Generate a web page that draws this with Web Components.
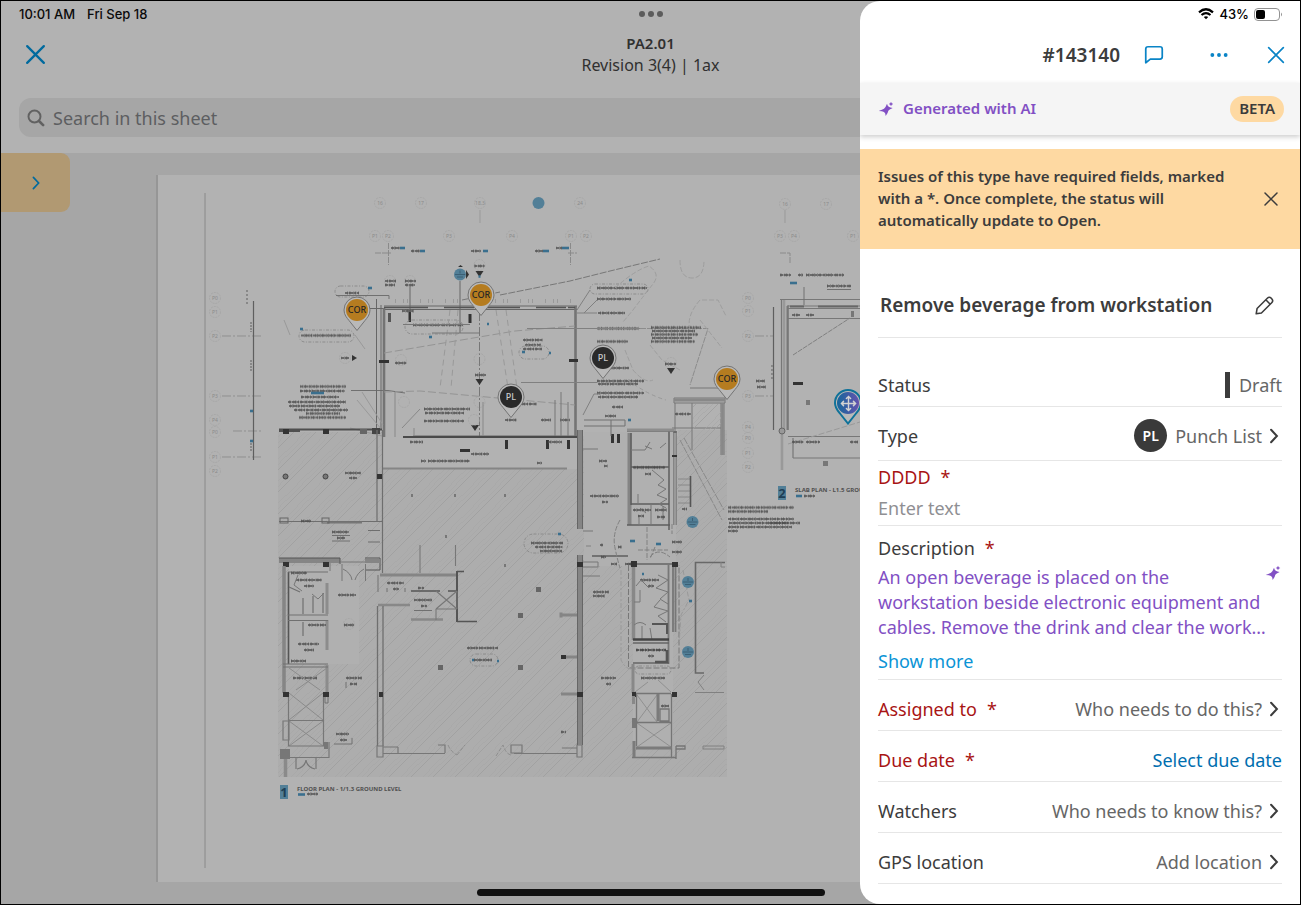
<!DOCTYPE html>
<html lang="en">
<head>
<meta charset="utf-8">
<title>PA2.01 – Issue #143140</title>
<meta name="viewport" content="width=device-width, initial-scale=1">
<style>
  *, *::before, *::after { box-sizing: border-box; }
  body { margin: 0; background: #000; font-family: "Noto Sans", "Open Sans", sans-serif; color: #3c3c3c; }
</style>
</head>
<body>
<tablet-app></tablet-app>

<script>
const RESET = `<style>
  *, *::before, *::after { box-sizing: border-box; }
  button { font: inherit; color: inherit; background: none; border: 0; padding: 0; margin: 0; cursor: pointer; }
  svg { display: block; flex: none; }
</style>`;

class BaseElement extends HTMLElement {
  constructor() {
    super();
    this.attachShadow({ mode: "open" }).innerHTML = RESET + this.render();
  }
  render() { return ""; }
}

/* Icons */
const ICONS = {
  close: '<path d="M4 4 20 20M20 4 4 20"/>',
  chevron: '<path d="M8.500 4.500 15.500 12 8.500 19.500"/>',
  search: '<circle cx="10" cy="10" r="8"/><path d="M16 16 21.500 21.500" stroke-width="3.500"/>',
  comment: '<path d="M3 19.500V5.500Q3 3 5.500 3H18.500Q21 3 21 5.500V14Q21 16.500 18.500 16.500H8L3 20.500Z" stroke-linejoin="round"/>',
  more: '<g fill="currentColor" stroke="none"><circle cx="4" cy="12" r="2.300"/><circle cx="12" cy="12" r="2.300"/><circle cx="20" cy="12" r="2.300"/></g>',
  pencil: '<path d="M2.500 21.500 3.500 15.500 15.500 3.500Q17.500 1.500 20 4 22.500 6.500 20.500 8.500L8.500 20.500ZM13.500 5.500 18.500 10.500" stroke-linejoin="round"/>',
  sparkle: '<g fill="currentColor" stroke="none"><path d="M13.500 4Q14.500 9.500 22 10.500 16.500 13 15.500 14.500 15 18 11.500 22.500 11.500 18 9 16.500 6.500 15 1 15 6.500 13 9 11.500 12 8.500 13.500 4Z"/><path d="M19.500 1 20.600 3.400 23 4.500 20.600 5.600 19.500 8 18.400 5.600 16 4.500 18.400 3.400Z"/></g>',
  move: '<path d="M12 2V22M2 12H22M9 5 12 2 15 5M9 19 12 22 15 19M5 9 2 12 5 15M19 9 22 12 19 15"/>'
};
customElements.define("ui-icon", class extends HTMLElement {
  connectedCallback() {
    if (this.shadowRoot) return;
    const size = this.getAttribute("size") || 24;
    const stroke = this.getAttribute("stroke") || 2;
    this.attachShadow({ mode: "open" }).innerHTML = `
      <style>:host { display: inline-flex; flex: none; } svg { display: block; }</style>
      <svg width="${size}" height="${size}" viewBox="0 0 24 24" fill="none" stroke="currentColor"
        stroke-width="${stroke}" stroke-linecap="round" aria-hidden="true">${ICONS[this.getAttribute("name")]}</svg>`;
  }
});

/* Issue pins placed on the sheet */
customElements.define("map-pin", class extends BaseElement {
  render() {
    return `<style>
      :host { position: absolute; width: 28px; height: 36px; font-size: 9px; font-weight: 500; line-height: 12px; color: #ccc;
        --dot: #2a2a2a; --shell: #b9b9b9; --edge: #747474; --edge-width: 1; }
      :host([kind="cor"]) { --dot: #b57c20; color: #252525; }
      :host([kind="move"]) { --dot: linear-gradient(90deg, #16679b, #6552ae); --edge: #0f7299; --edge-width: 2; color: #d2d2d2; }
      svg { position: absolute; inset: 0; }
      .shell { fill: var(--shell); stroke: var(--edge); stroke-width: var(--edge-width); }
      .dot { position: relative; width: 22px; height: 22px; margin: 3px; border-radius: 50%; background: var(--dot);
        display: flex; align-items: center; justify-content: center; }
    </style>
    <svg width="28" height="36" viewBox="0 0 28 36"><path class="shell" d="M14 1A13 13 0 0 0 1 14C1 19 4 22 6 24.500L14 34.500 22 24.500C24 22 27 19 27 14A13 13 0 0 0 14 1Z"/></svg>
    <div class="dot"><slot></slot></div>`;
  }
});

/* The drawing on the sheet */
const line = (d, w = 1, c = "#707070", extra = "") => `<path d="${d}" stroke="${c}" stroke-width="${w}" fill="none" ${extra}/>`;
const note = (x, y, w, c = "#4c4c4c") =>
  line(`M${x} ${y}h${w}`, 2, c, 'stroke-dasharray="3 .6 5 .5 2 .7 4 .5" opacity=".7"') +
  line(`M${x} ${y}h${w}`, 3.4, c, `stroke-dasharray="1 2 .8 1.500 1.200 3 .7 1" stroke-dashoffset="${(x + y) % 7}" opacity=".5"`);
const notes = (x, w, ys) => ys.map((y, i) => note(x + (i % 2), y, w - (i * 7) % 11)).join("");
const bubble = (x, y, t = "") => `<circle cx="${x}" cy="${y}" r="5.500" fill="none" stroke="#a2a2a2" stroke-width=".7" stroke-dasharray="2 1"/>` +
  (t ? `<text x="${x}" y="${y + 2}" font-size="5" fill="#8a8a8a" text-anchor="middle">${t}</text>` : "");
const blue = (x, y, w) => line(`M${x} ${y}h${w}`, 2.6, "#3a6f8e");
const spot = (x, y) => `<circle cx="${x}" cy="${y}" r="6" fill="#527f97"/>`;
const mark = (x, y) => spot(x, y) + line(`M${x - 5} ${y}H${x + 5}M${x - 3} ${y + 2.5}H${x + 3}M${x} ${y - 4}V${y - 1}`, 1, "#3c6075");
const block = (x, y, w, h, c = "#333") => `<rect x="${x}" y="${y}" width="${w}" height="${h}" fill="${c}"/>`;
const cloud = (x, y, w, h) => `<rect x="${x}" y="${y}" width="${w}" height="${h}" rx="${h / 2}" fill="none" stroke="#8c8c8c" stroke-width="1" stroke-dasharray="3 1.500 1 1.500"/>`;
const tri = (x, y) => `<path d="M${x - 4} ${y - 3}h8l-4 6z" fill="#333"/>`;

const DRAWING = [
  line("M205 193V868", 1.6, "#999"),
  /* floor hatch and unhatched rooms */
  '<path d="M278 432H383V469H582V436H678V430H727V777H278Z" fill="#adadad"/>',
  '<path d="M278 432H383V469H582V436H678V430H727V777H278Z" fill="url(#hatch)"/>',
  block(289, 566, 70, 98, "#b0b0b0"), block(584, 432, 92, 134, "#b0b0b0"), block(633, 566, 40, 182, "#b0b0b0"),
  /* column bubbles */
  bubble(380, 203, "16"), bubble(421, 203, "17"), bubble(480, 203, "18.3"), bubble(580, 203, "24"), bubble(785, 204, "16"), bubble(826, 204, "17"),
  spot(538.5, 203), line("M480 210V223M785 210V223", 1, "#999"),
  [375, 388, 449, 512, 571, 586, 780, 794, 853].map((x, i) => bubble(x, 236, "P" + (i % 4 + 1))).join(""),
  [298, 312, 336, 396, 420, 432, 457, 471].map((y, i) => bubble(215, y, "P" + (i % 5))).join(""),
  [298, 311, 336, 396, 427, 438, 453, 467].map((y, i) => bubble(748, y, "P" + (i % 5))).join(""),
  /* dimension strings */
  note(391, 248, 9), blue(400, 248, 5), note(411, 251, 9), blue(420, 251, 5), note(471, 251, 10), blue(483, 251, 5),
  note(535, 251, 8), blue(543, 251, 6), note(556, 248, 6), blue(562, 248, 7),
  line("M375 253H391M388.500 243V265M570.500 243V265M568 253H577M780 253H790V263", 1, "#8a8a8a", 'stroke-dasharray="6 1"'),
  line("M222 336H262M222 396H262M233 431H262M222 457H262M755 336H773M755 396H773", 1, "#8f8f8f", 'stroke-dasharray="9 2 2 2"'),
  line("M253.500 301V460M773.500 307V430", 1.200, "#5f5f5f"), line("M251 322V332M251 360V372M251 440V452", 2, "#888", 'stroke-dasharray="2 1"'), blue(250, 411, 3), blue(250, 441, 3),
  line("M247 290V304M772 365V380", 2, "#888", 'stroke-dasharray="2 2"'),
  /* markers above the hall */
  mark(460, 274.5), '<path d="M466 270l3 4.500-3 4.500zM458 267l5 0-2.500-2z" fill="#333"/>', tri(479.5, 274), note(474, 266, 11), bubble(479.5, 265), bubble(390, 281), bubble(410, 281), note(385, 281, 11), note(385, 285, 10), note(405, 281, 11), note(405, 285, 10),
  line("M460 281V333M410 286V322", 1, "#666"), block(408.500, 312, 2.500, 10), block(468.500, 314, 3, 9), block(388, 313, 3, 9, "#555"),
  line("M479.500 282V436", 1, "#777", 'stroke-dasharray="9 2 2 2"'), blue(478.500, 276.500, 2),
  cloud(335, 286, 34, 11), line("M336 295.500H389V299", 1), note(345, 293, 14), cloud(299, 330, 55, 12), note(301, 335.500, 50), cloud(405, 320, 58, 14), note(413, 325, 50),
  bubble(345, 358), note(341, 358, 8), '<path d="M352 355l5 3-5 3z" fill="#333"/>', blue(368, 288, 4), blue(300, 329, 3), blue(429, 337, 3), blue(487, 324, 2),
  note(300, 386.5, 46), notes(300, 45, [391, 397]), notes(288, 58, [402, 406]), note(294, 410, 54), note(306, 413.5, 34), note(299, 417.500, 47), blue(311, 393, 13), line("M351 390.500H388L405 393", 1),
  line("M284 320l6 15M355 335l10 14", 1, "#999"),
  /* main hall */
  line("M370 308.500H384M384 306H577M384 309.500H577M376.500 299V430M381 305V430M413 436H582", 1, "#666"),
  line("M384 308V437M575.500 306V437", 2.6, "#747474"), line("M395 301H574", 4, "#999", 'stroke-dasharray="1 7 1 3 1 12"'), line("M403 437H580", 2.2, "#4a4a4a"), line("M383 468.500H567", 2.2, "#858585"),
  line("M384 307.500H575", 1.6, "#555", 'stroke-dasharray="44 16 30 2"'),
  block(379, 360, 10, 3), block(569, 359, 9, 3), block(505, 440, 3, 9), block(546, 440, 3, 9), block(567, 440, 3, 9), block(611, 434, 3, 9), block(617, 434, 3, 9), block(460, 449, 10, 3),
  line("M384 353L515 331 575 326M384 392 420 391 575 405", 1, "#949494", 'stroke-dasharray="8 3"'),
  line("M450 310L440 388M458 310 451 388M496 310 508 388M506 310 517 388", 1, "#999", 'stroke-dasharray="6 4"'),
  line("M500 295L570 281 610 271 660 259M462 300 500 292", 1, "#777", 'stroke-dasharray="7 1.500"'),
  line("M432 333l48 0M403 324.500H470", 1, "#777"), note(402, 311, 12), note(523, 340, 20), note(525, 345, 16), note(523, 349, 19), cloud(519, 346, 30, 13), blue(522, 352, 3), blue(549, 353, 2),
  bubble(401, 360), note(395, 363, 12), bubble(479.5, 359), note(475, 375, 11), tri(479.500, 382), tri(475, 428), bubble(474, 420), bubble(404, 402), bubble(479.500, 402),
  notes(424, 46, [409, 413]), note(424, 421, 40), line("M402 428L420 409M483 402V436M414 428V436M395 392V437", 1, "#888"), note(517, 404, 20), note(505, 420, 12), note(541, 420, 10), note(560, 420, 10),
  line("M555 400V436M561 392V436M568 402V436", 1, "#777"), note(421, 461, 5), note(428, 461, 42), note(471, 454, 18), note(537, 463, 5),
  line("M350 428L382 436M357 400 382 430M362 392 383 425", 1, "#999"), note(410, 442, 13), note(548, 442, 14),
  /* notes right of the hall */
  notes(597, 50, [288]), notes(597, 34, [299, 313]), note(597, 328.5, 42), note(597, 341.5, 31), note(597, 368, 32), notes(597, 47, [381, 384]), notes(597, 47, [393, 397]),
  line("M577 313H597M527 328.500H640M521 382.500H597M584 313L597 300M577 310 590 290M583 415 594 394H600", 1, "#808080"), line("M640 328.500H708L690 385", 1, "#8c8c8c", 'stroke-dasharray="6 1"'), notes(651, 50, [327.5, 331, 334.5, 338, 341.5]), blue(629, 280, 3), cloud(590, 284, 58, 10),
  line("M615 288q20-18 34-22q12 8 4 18t-20 26l-10 12M690 330q-4-14 10-30h18l8 16M625 350l8 20q12 14 20 10M700 320l22 28M680 260q0 18 12 18t12-18M650 345l12 15 18 10", 1, "#9e9e9e", 'stroke-dasharray="5 2"'),
  bubble(671, 363), tri(671, 371), note(665, 364, 11), note(612, 407, 11), note(605, 416, 11), blue(628, 420, 3), line("M584 420H625V426H584M611 420V436", 1, "#707070"),
  line("M628 380q20 15 38 20", 1, "#999", 'stroke-dasharray="4 3"'),
  line("M674 398H725V403H674ZM675 403V445M692 403V450M721 403V455M724 403V455M672 428H721M690 388H720", 1, "#777"), line("M674 400H725", 3, "#888"), line("M722.500 403V455", 2.5, "#888"), note(675, 414, 16), block(693, 404, 28, 26, "url(#hatch)"),
  line("M680 440L722 520M684 438 724 510", 1, "#8a8a8a", 'stroke-dasharray="7 1"'),
  /* west rooms */
  line("M279 429.500H382M279 431H300", 2.2, "#4f4f4f"), block(283, 429, 6, 5), block(323, 429, 6, 5), block(360, 429, 7, 5, "#666"), block(372, 428, 8, 6, "#444"),
  line("M377 430V521M382.500 430V573M279 521.500H382M380 530.500H368M380 542H368", 1.2, "#6e6e6e"), line("M327 522.500H362", 2, "#777"),
  '<g fill="#777" stroke="#444"><circle cx="285.500" cy="476.500" r="2.500"/><circle cx="325.500" cy="476.500" r="2.500"/></g>', block(377, 474, 5, 5), note(345, 473, 16), note(349, 478, 8), note(301, 521, 10), note(332, 532, 17), note(337, 538, 8), line("M332 535.500H350M332 541H350", 1),
  '<g fill="none" stroke="#666"><rect x="280" y="518" width="8" height="5"/><rect x="322" y="518" width="7" height="5"/></g>',
  line("M279 560.500H340", 5, "#858585"), line("M279 558H340V564M365 558H380V570H365", 1, "#555"), line("M365 561H380", 4, "#858585"), block(283, 562, 6, 5), block(323, 562, 6, 5),
  line("M340 562H365M342 564V581M365.500 564V581M343 569q8 4 9 11M364 569q-7 4-9 11M330 563V571", 1, "#777"),
  line("M284 566V693", 3.5, "#858585"), line("M288.500 572V664", 1.6, "#555"), line("M327 583V614M327 620V650M327 665V695", 3, "#8c8c8c"), line("M288 615H328M288 620.500H328M283 664H328M283 667H328M288 572H328M303 598V613M313 596V613M323 593V613M289 587 300 592M303 602V614M303 622V636", 1.2, "#707070"),
  note(296, 580, 26), note(304, 586, 10), note(291, 573, 16), note(338, 595, 18), note(298, 644, 21), note(304, 650, 10), note(291, 661, 15), note(308, 625, 18), bubble(349, 624), note(344, 625, 10), line("M298 575l-4 10 8 6M312 594l6 5 6-6", 1, "#777"),
  note(293, 678, 24), line("M289 668L320 690M327 668 296 690M289 693 323 720M323 693 289 720M289 721 323 746M323 721 289 746", 1, "#8b8b8b"),
  line("M288.500 693V746M323.500 693V746M288 720.500H323M288 746H328M329 742V757.500H290M296 757V769M316 757V769M297 769q8-2 9-9q1 7 9 9M283 721V740H289V721Z", 1.2, "#777"), block(283, 692, 6, 5), block(323, 692, 6, 5), block(280, 749, 10, 10, "#777"), line("M285.500 759V777", 3.500, "#8a8a8a"), block(324, 742, 4, 7, "#777"), line("M325 697V703H328V697", 1),
  note(346, 678, 16), note(350, 684, 7), note(336, 734, 13), note(340, 740, 7), line("M334 744H352V738M346 682V688", 1),
  /* centre rooms */
  line("M380 575H457", 3, "#858585"), line("M457 571V622", 2, "#555"), line("M457 571.500H464M457 621.500H477M411 591H440M448 591H457", 1.4, "#555"), line("M378 605H410M411 619.500H443", 2.6, "#888"), line("M436 591L457 609M457 591 436 609M436 609V620M436 609H457M420 545V573M455.500 545V566M457 591V609M378 575V592", 1.1, "#777"),
  note(387, 583, 17), note(393, 589, 6), note(414, 600, 18), note(421, 606, 6), note(418, 588, 6), line("M414 610.500H432M387 588V592M405 588V592", 1),
  line("M377.500 606V746M383 606V746", 1.3, "#6f6f6f"), block(379, 692, 4, 5),
  [[412, 495], [455, 495], [505, 495], [446, 536], [505, 565]].map(([x, y]) => block(x - 1, y - 1, 2, 3, "#777")).join(""),
  [[520, 615], [520, 667], [440, 667], [538, 589]].map(([x, y]) => block(x - 2, y - 2, 5, 5, "#666")).join(""),
  note(467, 648, 31), cloud(470, 654, 28, 12), note(474, 660, 18), blue(472, 660, 2), blue(497, 661, 2),
  cloud(524, 534, 44, 19), note(531, 543, 32), note(535, 547, 28), note(540, 551, 22), blue(558, 534, 3),
  line("M377 746H383V757H377ZM383 753.500H445M398 747V753M438 745H445V753M514 753.500H577V757H582V745H577V753M562 748H577M511 745H522V753H511ZM383 747H398", 1.2, "#777"),
  line("M448 745q3 7 9 10M457 755 465 745M496 756 503 745q3 9 8 10", 1, "#8e8e8e", 'stroke-dasharray="4 1.500"'),
  /* east wing */
  line("M580 430V529M580 555V745", 4.500, "#858585"), line("M577.500 430V529M582.500 430V529M577.500 555V745M582.500 555V745", 1, "#666"), line("M561 615H577M561 612.500V617.500M561 657H577M561 694H577", 3, "#858585"), block(577, 562, 6, 5), block(577, 692, 6, 5), block(561, 655, 5, 4), note(561, 732, 5),
  line("M583 449H598M583 576H600M583 562H598V567H583M583 531H593", 1, "#777"), note(590, 496, 29), note(602, 502, 6), note(599, 461, 8), note(604, 466, 4), note(593, 592, 16), note(593, 596, 12), note(601, 678, 15), note(606, 684, 5),
  line("M629.500 433V525", 4, "#848484"), line("M627 431H674M631 433V505M669 431V530M674 431V525M676 431V525M592 556H628M627 525H670M631 467H669M631 504H669", 1.5, "#5d5d5d"), line("M675 433V525", 3, "#999"), line("M627 430H674", 3, "#8d8d8d"),
  line("M631 450H645L650 442M660 448l6-5M645 446l7 3M652 470l12 10-6 5 8 4-9 6 10 4-8 5 7 4M638 494V504M651 504V525M663 506V520M640 508l6 5M639 515V525H645", 1, "#777"), note(633, 467.5, 32, "#444"), note(645, 474, 6), note(633, 510, 18), note(655, 510, 12), note(638, 516, 6), note(657, 517, 8), block(672, 455, 5, 2),
  line("M678 479H690M678 485H690M678 491H690M678 497H690M678 503H690", 1, "#888"), line("M690.500 476V507", 1.600, "#555"), note(682, 509, 5),
  note(600, 545, 3), note(618, 547, 4), blue(630, 541, 5), blue(656, 544, 5), line("M647 527V560M620 520q-8 14-5 28t5 20M650 557q8-10 20 0M655 547l-5 12M638 550H668M586 546H592M672 524V534", 1, "#808080", 'stroke-dasharray="5 1.500"'), note(672, 542, 10), note(672, 552, 10), note(601, 557, 5),
  line("M633.500 563V640", 3.500, "#888"), line("M668.500 565V664M673 565V632M675.500 565V632M627 564H678", 1.8, "#777"), block(631, 561, 6, 6), block(672, 562, 6, 5), note(611, 564, 6), note(625, 564, 6), note(640, 580, 19), note(648, 586, 6),
  line("M636 586l5-6 8 8M658 575l10 5-12 8 12 4-8 7 8 5M634 602H640V590M642 626V640M652 640l-2-12M634 625q6-5 12 0M660 600l-6 7 14 4-10 5 8 6", 1, "#777"), line("M652 624H667V634", 2, "#555"),
  line("M633 639.500H669", 2.600, "#444"), line("M633 643H669M633 663H669", 1.500, "#666"), line("M667 650V662H655", 2.600, "#555"), note(636, 650, 30, "#333"), note(648, 656, 6),
  line("M628.500 565V668H679V565", 1, "#777", 'stroke-dasharray="6 2"'), line("M621 570V660q6 12 14 8M683 570l6 30-8 15-2 30", 1, "#999", 'stroke-dasharray="5 2 2 2"'), blue(689, 601, 3), blue(642, 574, 2), cloud(635, 666, 36, 8),
  mark(692.5, 522), mark(688, 582), mark(688, 652),
  line("M725 562.500H695.500V673H704", 1.600, "#686868"), line("M704 675l-6 7 6 8M695 692.500H724", 1, "#808080"), line("M721 562V567H725M703 746H724M703 749H724V746M703 746V749", 1, "#808080"),
  line("M633 664V693", 3, "#888"), note(641, 678, 24), line("M635 692L648 682M671 692 658 680M637 695 657 722M657 695 637 722M637 723 671 747M671 723 637 747", 1, "#909090"),
  line("M636.500 694V746M658 694V721M671.500 694V757M636 722.500H671M636 693.500H671M632 757.500H676M676 746V759M676 746H685V749H676M660 709H669V721H660Z", 1.3, "#757575"), line("M636 748H672M634 741V757M658 694V721", 3, "#7b7b7b"), block(632, 692, 4, 5), block(672, 692, 5, 5), block(632, 718, 4, 10, "#777"), block(632, 696, 3, 8, "#888"), note(661, 706, 8),
  /* second plan */
  line("M780 299.500H1300M788 306H1300M788 308.500H1300M788 318.500H1300M781.500 299V430M788 305V430M788 436.500H1300M793 458H1300M793 438V458", 1.200, "#777"), line("M784 300V430M782 430V470", 2.600, "#999"), line("M787.500 306V430", 2, "#777"), line("M790 306.500H1300", 2, "#666", 'stroke-dasharray="14 14 40 4"'),
  line("M793 355L850 318", 1, "#808080", 'stroke-dasharray="5 1"'), line("M788 444L860 422", 1, "#999", 'stroke-dasharray="6 2"'), block(793, 382, 10, 3), note(780, 275, 11), note(798, 275, 5), note(806, 275, 38), note(827, 286, 24), line("M827 289.500H851M804 287V305", 1), blue(790, 283, 7), note(792, 315, 8), note(806, 315, 8), note(792, 442, 12), note(806, 442, 14), block(851, 311, 3, 6, "#777"), block(806, 400, 4, 5, "#777"), block(823, 461, 5, 5, "#777"), note(756, 381, 9), note(757, 387, 9), note(850, 442, 8),
  '<circle cx="782" cy="431" r="3" fill="#999" stroke="#666"/>',
  /* view titles and general notes */
  block(778, 486, 8, 14, "#527f97"), '<text x="782" y="498" font-size="13" font-weight="700" text-anchor="middle" fill="#1e3e55">2</text>',
  '<text x="795" y="492" font-size="6" font-weight="700" fill="#505050">SLAB PLAN - L1.5 GROUND LEVEL</text>', blue(796, 496, 6), note(804, 496, 11),
  notes(728, 66, [507.5]), note(728, 511.500, 40), notes(728, 66, [519, 523]), note(728, 527, 64), note(728, 531, 10), note(770, 523, 30),
  block(280, 785, 8, 14, "#527f97"), '<text x="284" y="797" font-size="13" font-weight="700" text-anchor="middle" fill="#1e3e55">1</text>',
  '<text x="297" y="791" font-size="6" font-weight="700" fill="#505050">FLOOR PLAN - 1/1.3 GROUND LEVEL</text>', blue(298, 794.5, 7), note(307, 794, 11)
].join("");

customElements.define("floor-plan", class extends BaseElement {
  render() {
    return `<style>
      :host { display: block; overflow: hidden; background: #b2b2b2; border-left: 2px solid #969696; }
    </style>
    <svg width="1143" height="707" viewBox="158 175 1143 707" role="img" aria-label="Floor plan">
      <defs><pattern id="hatch" width="22" height="22" patternUnits="userSpaceOnUse">
        <path d="M-2 24 24-2M-2 2 2-2M20 24 24 20" stroke="#9f9f9f" stroke-width=".9"/><path d="M-2 14 14-2M9 24 24 9M-2 19 19-2M14 24 24 14" stroke="#a6a6a6" stroke-width=".6"/>
      </pattern></defs>
      ${DRAWING}
    </svg>`;
  }
});

/* Sheet viewer behind the issue drawer */
customElements.define("sheet-viewer", class extends BaseElement {
  render() {
    return `<style>
      :host { display: flex; flex-direction: column; min-width: 0; background: #b2b2b2; color: #303030; }
      .status { display: grid; grid-template-columns: 1fr auto 1fr; align-items: center; height: 26px; padding: 0 18px;
        font: 500 13px/16px Inter, "Liberation Sans", sans-serif; color: #0a0a0a; }
      .when { display: flex; gap: 12px; }
      .grab { display: flex; gap: 3px; }
      .grab i { width: 6px; height: 6px; border-radius: 50%; background: #5c5c5c; }
      header { display: grid; grid-template-columns: 60px 1fr 60px; align-items: center; height: 54px; padding: 0 18px; color: #303030; }
      header button { color: #006a9e; justify-self: start; padding: 0 4px; display: flex; }
      h1 { margin: 0; font-size: 15px; line-height: 22px; font-weight: 600; text-align: center; }
      h1 span { display: block; font-size: 16px; font-weight: 400; }
      label.search { display: flex; align-items: center; gap: 8px; height: 39px; margin: 17px 18px 16px; padding: 0 8px; border-radius: 12px;
        background: #a6a6a6; color: #616161; }
      input { flex: 1; min-width: 0; border: 0; background: none; outline: 0; padding: 0; font: 18px/24px "Noto Sans", sans-serif; color: inherit; }
      input::placeholder { color: #5d5e61; opacity: 1; }
      .canvas { position: relative; flex: 1; display: flex; flex-direction: column; background: #a6a6a6; overflow: hidden; }
      floor-plan { margin: 22px 0 0 155px; }
      .drawer { position: absolute; left: 0; top: 0; width: 69px; height: 59px; border-radius: 0 9px 9px 0; background: #b19972; color: #006a9e;
        display: flex; align-items: center; justify-content: center; }
      .home { align-self: center; width: 348px; height: 7px; margin: 7px 0 8px; border-radius: 4px; background: #111; }
    </style>
    <div class="status"><div class="when"><span>10:01 AM</span><span>Fri Sep 18</span></div><div class="grab"><i></i><i></i><i></i></div></div>
    <header>
      <button aria-label="Close sheet"><ui-icon name="close" size="25" stroke="2.200"></ui-icon></button>
      <h1>PA2.01<span>Revision 3(4) | 1ax</span></h1>
    </header>
    <label class="search"><ui-icon name="search" size="18" stroke="2.600"></ui-icon><input type="search" aria-label="Search in this sheet" placeholder="Search in this sheet"></label>
    <div class="canvas">
      <floor-plan></floor-plan>
      <map-pin kind="cor" style="left:342px;top:143px">COR</map-pin>
      <map-pin kind="cor" style="left:466px;top:128px">COR</map-pin>
      <map-pin style="left:496px;top:230px">PL</map-pin>
      <map-pin style="left:588px;top:191px">PL</map-pin>
      <map-pin kind="cor" style="left:712px;top:212px">COR</map-pin>
      <map-pin kind="move" style="left:833px;top:236px"><ui-icon name="move" size="17" stroke="2"></ui-icon></map-pin>
      <button class="drawer" aria-label="Expand"><ui-icon name="chevron" size="18" stroke="2.200"></ui-icon></button>
      <div class="home"></div>
    </div>`;
  }
});

/* One row of the issue form */
customElements.define("issue-field", class extends HTMLElement {
  connectedCallback() {
    if (this.shadowRoot) return;
    const required = this.hasAttribute("required") ? '<span class="star">*</span>' : "";
    this.attachShadow({ mode: "open" }).innerHTML = RESET + `<style>
      :host { display: flex; align-items: center; justify-content: space-between; min-height: 51px; padding-top: 7px;
        border-bottom: 1px solid #e6e6e6; font-size: 18px; line-height: 24px; color: #666; }
      :host([tall]) { min-height: 54px; padding-top: 4px; }
      :host([stacked]) { display: block; padding: 4px 0 5px; }
      :host([stacked][tall]) { padding: 10px 0 6px; }
      .label { color: #3c3c3c; }
      :host([missing]) .label, .star { color: #a81414; }
      .star { margin-left: 10px; }
      .value { display: flex; align-items: center; gap: 8px; }
      :host([stacked]) .value { display: block; }
      input { display: block; width: 100%; margin-top: 6px; border: 0; outline: 0; padding: 0; background: none; font: inherit; height: 25px; }
      input::placeholder { color: #8f8f93; opacity: 1; }
    </style>` + (this.hasAttribute("placeholder")
      ? `<label><span class="label">${this.getAttribute("label")}</span>${required}<input type="text" placeholder="${this.getAttribute("placeholder")}"></label>`
      : `<div><span class="label">${this.getAttribute("label")}</span>${required}</div><div class="value"><slot></slot></div>`);
  }
});

customElements.define("picker-button", class extends BaseElement {
  render() {
    return `<style>:host { display: block; } button { display: flex; align-items: center; gap: 2px; } ui-icon { color: #3c3c3c; margin-right: -2px; }</style>
      <button><slot></slot><ui-icon name="chevron" size="20" stroke="2.400"></ui-icon></button>`;
  }
});

/* Issue drawer */
customElements.define("issue-panel", class extends BaseElement {
  render() {
    return `<style>
      :host { display: flex; flex-direction: column; background: #fff; border-radius: 20px 0 0 20px; overflow: hidden; }
      .status { display: flex; align-items: center; justify-content: flex-end; gap: 5px; height: 26px; padding-right: 17px;
        font: 500 13px/16px Inter, "Liberation Sans", sans-serif; color: #000; }
      header { display: flex; align-items: center; justify-content: flex-end; gap: 36px; height: 56px; padding-right: 13px; color: #0a84c6; }
      header button { display: flex; }
      .id { display: flex; align-items: center; gap: 23px; margin-right: 8px; }
      h2, h3 { margin: 0; color: #3c3c3c; font-weight: 600; font-size: 19px; line-height: 26px; }
      .ai { position: relative; display: flex; align-items: center; gap: 9px; height: 52px; padding: 0 16px 0 18px; background: #f5f5f5; color: #8250c4;
        box-shadow: 0 2px 5px #0003; font-weight: 600; font-size: 15px; line-height: 20px; }
      .ai span { padding: 2px 0 4px; }
      .ai .beta { margin-left: auto; padding: 2px 9px 4px; border-radius: 13px; background: #fed9a2; color: #3c3c3c; }
      .notice { display: flex; align-items: center; justify-content: space-between; min-height: 100px; margin-top: 14px; padding: 0 20px 0 18px; background: #fed9a2;
        color: #3c3c3c; font-size: 15px; line-height: 22px; font-weight: 600; }
      .notice p { margin: 0 0 2px; flex: 0 1 360px; }
      .notice button { display: flex; }
      form { padding: 0 18px; }
      .heading { display: flex; align-items: center; justify-content: space-between; height: 89px; padding: 24px 7px 0 2px; border-bottom: 1px solid #e6e6e6; margin-bottom: 18px; }
      .heading button { display: flex; }
      .draft { border-left: 5px solid #3c3c3c; padding: 1px 0 1px 9px; }
      .badge { display: flex; align-items: center; justify-content: center; width: 33px; height: 33px; border-radius: 50%; background: #3a3a3a; color: #fff;
        font-size: 14px; font-weight: 600; }
      .desc { display: flex; justify-content: space-between; padding-top: 5px; color: #8250c4; line-height: 25px; }
      .desc p { margin: 0; flex: 1 1 0; min-width: 0; white-space: nowrap; }
      .desc ui-icon { margin-right: 1px; }
      .more { color: #0a94d6; text-decoration: none; display: inline-block; margin-top: 9px; }
      .date { color: #006eaf; }
    </style>
    <div class="status">
      <svg width="16" height="12" viewBox="0 0 16 12" fill="none" stroke="#000" stroke-width="2.200"><path d="M1 4.300Q8-1.800 15 4.300"/><path d="M3.500 7Q8 3.200 12.500 7"/><path d="M5.800 9 8 11.300 10.200 9Q8 7.500 5.800 9Z" fill="#000" stroke="none"/></svg>
      <span>43%</span>
      <svg width="29" height="13" viewBox="0 0 29 13"><rect x=".5" y=".5" width="25" height="12" rx="3.500" fill="none" stroke="#929292"/><rect x="2" y="2" width="9" height="9" rx="2" fill="#000"/><path d="M27 4.500Q29 6.500 27 8.500Z" fill="#929292"/></svg>
    </div>
    <header>
      <div class="id"><h2>#143140</h2><button aria-label="Comments"><ui-icon name="comment" size="22" stroke="1.900"></ui-icon></button></div>
      <button aria-label="More"><ui-icon name="more" size="20"></ui-icon></button>
      <button aria-label="Close issue"><ui-icon name="close" size="22" stroke="1.800"></ui-icon></button>
    </header>
    <div class="ai"><ui-icon name="sparkle" size="16"></ui-icon><span>Generated with AI</span><span class="beta">BETA</span></div>
    <div class="notice"><p>Issues of this type have required fields, marked with a *. Once complete, the status will automatically update to Open.</p>
      <button aria-label="Dismiss"><ui-icon name="close" size="18" stroke="2"></ui-icon></button></div>
    <form>
      <div class="heading"><h3>Remove beverage from workstation</h3><button type="button" aria-label="Edit title"><ui-icon name="pencil" size="21" stroke="1.800"></ui-icon></button></div>
      <issue-field label="Status"><span class="draft">Draft</span></issue-field>
      <issue-field label="Type" tall><span class="badge">PL</span><picker-button>Punch List</picker-button></issue-field>
      <issue-field label="DDDD" stacked required missing placeholder="Enter text"></issue-field>
      <issue-field label="Description" stacked tall required>
        <div class="desc"><p>An open beverage is placed on the<br>workstation beside electronic equipment and<br>cables. Remove the drink and clear the work…</p><ui-icon name="sparkle" size="16"></ui-icon></div>
        <a class="more" href="#more">Show more</a>
      </issue-field>
      <issue-field label="Assigned to" required missing><picker-button>Who needs to do this?</picker-button></issue-field>
      <issue-field label="Due date" required missing><button type="button" class="date">Select due date</button></issue-field>
      <issue-field label="Watchers"><picker-button>Who needs to know this?</picker-button></issue-field>
      <issue-field label="GPS location"><picker-button>Add location</picker-button></issue-field>
    </form>`;
  }
});

customElements.define("tablet-app", class extends BaseElement {
  render() {
    return `<style>
      :host { display: grid; grid-template-columns: minmax(0, 1fr); min-height: 100vh; border: 1px solid #000; }
      sheet-viewer, issue-panel { grid-area: 1 / 1; }
      issue-panel { justify-self: end; width: min(440px, 100%); z-index: 1; }
    </style>
    <sheet-viewer></sheet-viewer><issue-panel></issue-panel>`;
  }
});
</script>
</body>
</html>
